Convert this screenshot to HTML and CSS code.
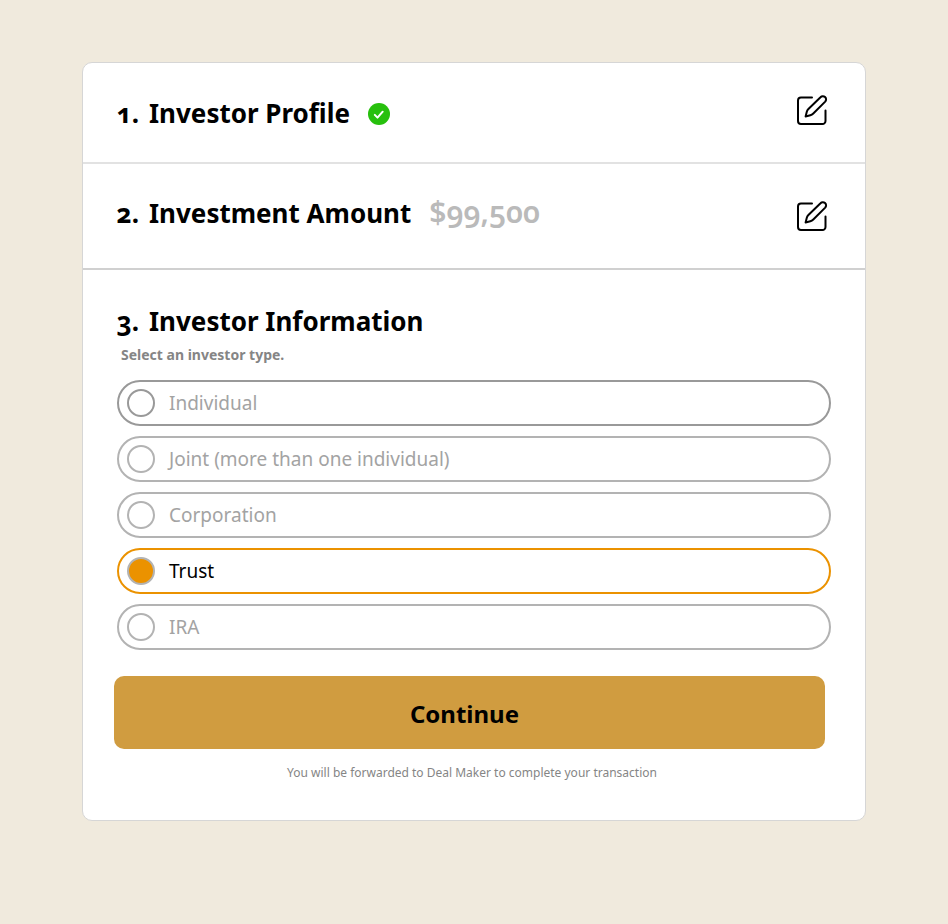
FILE: index.html
```html
<!DOCTYPE html>
<html lang="en">
<head>
  <meta charset="utf-8">
  <meta name="viewport" content="width=device-width, initial-scale=1">
  <title>Investor Information</title>
  <link rel="stylesheet" href="styles.css">
</head>
<body>
  <main class="card">
    <section class="step">
      <h2 class="heading"><span class="number">1.</span><span>Investor Profile</span></h2>
      <svg class="check" viewBox="0 0 22 22" role="img" aria-label="Completed">
        <circle cx="11" cy="11" r="11" fill="#27c00d"/>
        <path d="M6.800 11.900l2.700 2.700 5.200-5.900" fill="none" stroke="#fff" stroke-width="2" stroke-linecap="round" stroke-linejoin="round"/>
      </svg>
      <button class="edit" type="button" aria-label="Edit investor profile">
        <svg viewBox="0 0 32 32" fill="none" stroke="#000" stroke-width="2" stroke-linecap="round" stroke-linejoin="round">
          <path d="M16 3.500H5a3 3 0 0 0-3 3V27a3 3 0 0 0 3 3h21.500a3 3 0 0 0 3-3V16.500"/>
          <path d="M24.500 3.200a3.200 3.200 0 0 1 4.700 4.400L17.300 19.500q-1.400 1.400-3 1.800l-4.700 1.200 1.200-4.700q.4-1.600 1.600-2.800z"/>
        </svg>
      </button>
    </section>
    <section class="step step-amount">
      <h2 class="heading"><span class="number">2.</span><span>Investment Amount</span></h2>
      <span class="amount">$99,500</span>
      <button class="edit" type="button" aria-label="Edit investment amount">
        <svg viewBox="0 0 32 32" fill="none" stroke="#000" stroke-width="2" stroke-linecap="round" stroke-linejoin="round">
          <path d="M16 3.500H5a3 3 0 0 0-3 3V27a3 3 0 0 0 3 3h21.500a3 3 0 0 0 3-3V16.500"/>
          <path d="M24.500 3.200a3.200 3.200 0 0 1 4.700 4.400L17.300 19.500q-1.400 1.400-3 1.800l-4.700 1.200 1.200-4.700q.4-1.600 1.600-2.800z"/>
        </svg>
      </button>
    </section>
    <form class="details">
      <h2 class="heading"><span class="number">3.</span><span>Investor Information</span></h2>
      <fieldset class="options">
        <legend class="hint">Select an investor type.</legend>
        <label class="option option-first"><input type="radio" name="type"><span>Individual</span></label>
        <label class="option"><input type="radio" name="type"><span>Joint (more than one individual)</span></label>
        <label class="option"><input type="radio" name="type"><span>Corporation</span></label>
        <label class="option"><input type="radio" name="type" checked><span>Trust</span></label>
        <label class="option"><input type="radio" name="type"><span>IRA</span></label>
      </fieldset>
      <button class="continue" type="submit">Continue</button>
      <p class="note">You will be forwarded to Deal Maker to complete your transaction</p>
    </form>
  </main>
</body>
</html>
```
FILE: styles.css
```css
* {
  box-sizing: border-box;
}

body {
  margin: 0;
  padding: 62px 82px;
  background: #f0eadd;
  color: #000;
  font-family: "Noto Sans", "Open Sans", sans-serif;
  font-variant-numeric: oldstyle-nums;
}

.card {
  background: #fff;
  border: 1px solid #d6d6d6;
  border-radius: 10px;
}

.step {
  display: flex;
  align-items: flex-start;
  padding: 31px 37px 30px 34px;
  border-bottom: 2px solid #e2e2e2;
}

.step-amount {
  padding-top: 30px;
  padding-bottom: 36px;
  border-color: #d0d0d0;
}

.step-amount .edit {
  margin-top: 6px;
}

.heading {
  display: grid;
  grid-template-columns: 22px auto;
  column-gap: 10px;
  justify-content: start;
  margin: 0;
  font-size: 26px;
  line-height: 38px;
  font-weight: 700;
}

.number {
  justify-self: end;
}

.check {
  width: 22px;
  height: 22px;
  margin: 9px 0 0 18px;
}

.amount {
  margin-left: 18px;
  color: #bababa;
  font-size: 30px;
  line-height: 36px;
  font-weight: 600;
}

.edit {
  display: block;
  margin-left: auto;
  padding: 0;
  border: 0;
  background: none;
  cursor: pointer;
}

.edit svg {
  display: block;
  width: 32px;
  height: 32px;
}

.details {
  padding: 32px 34px 38px;
}

.options {
  display: flex;
  flex-direction: column;
  gap: 10px;
  margin: 0;
  padding: 0;
  border: 0;
}

.hint {
  padding: 5px 4px 15px;
  color: #858585;
  font-size: 14px;
  line-height: 20px;
  font-weight: 700;
}

.option {
  display: flex;
  align-items: center;
  gap: 14px;
  height: 46px;
  padding: 0 8px;
  border: 2px solid #b3b3b3;
  border-radius: 23px;
  color: #a3a3a3;
  font-size: 19px;
  line-height: 24px;
  cursor: pointer;
}

.option input {
  appearance: none;
  flex: none;
  width: 28px;
  height: 28px;
  margin: 0;
  border: 2px solid #b3b3b3;
  border-radius: 50%;
}

.option-first,
.option-first input {
  border-color: #999;
}

.option:has(:checked) {
  border-color: #eb9200;
  color: #000;
}

.option input:checked {
  background: #eb9200;
}

.continue {
  display: block;
  width: calc(100% - 3px);
  margin: 26px 0 0 -3px;
  padding: 20px 28px 17px 18px;
  border: 0;
  border-radius: 10px;
  background: #d09c40;
  color: #000;
  font: inherit;
  font-size: 24px;
  line-height: 36px;
  font-weight: 700;
  cursor: pointer;
}

.note {
  margin: 15px 4px 0 0;
  color: #858585;
  font-size: 12px;
  line-height: 18px;
  text-align: center;
}
```
